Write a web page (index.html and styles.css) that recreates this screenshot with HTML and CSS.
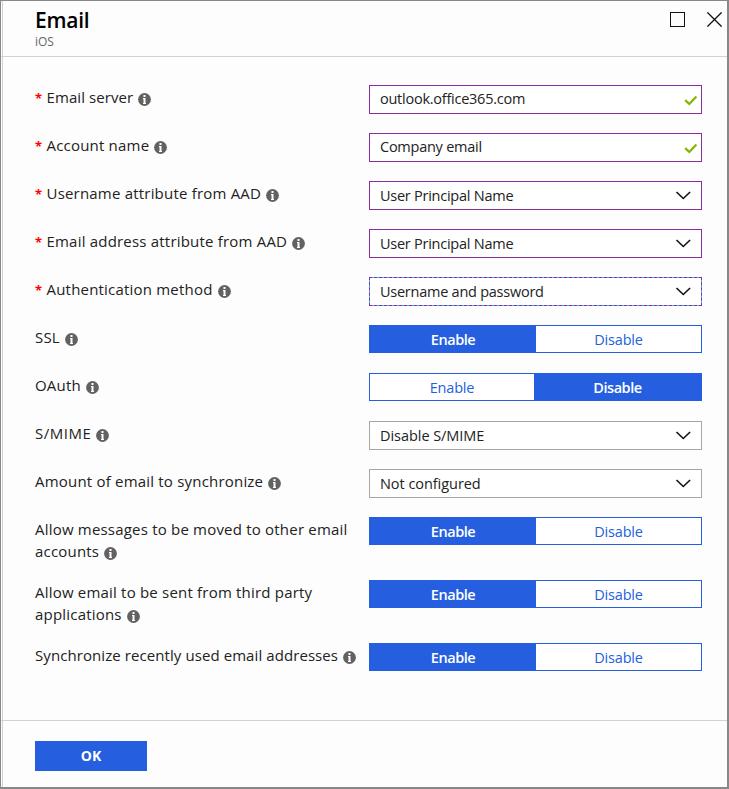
FILE: index.html
```html
<!DOCTYPE html>
<html lang="en">
<head>
<meta charset="utf-8">
<title>Email</title>
<link rel="stylesheet" href="styles.css">
</head>
<body>
<svg class="defs" aria-hidden="true">
  <symbol id="info" viewBox="0 0 13 13"><circle cx="6.5" cy="6.5" r="6.4" fill="#626262"/><path d="M5.500 2h2v2h-2zM5 5h2.500v5h.5v1H5v-1h.5V6H5z" fill="#fff"/></symbol>
  <symbol id="check" viewBox="0 0 14 11"><path d="M1.200 5.200 5.300 9 12.400 1.500" fill="none" stroke="#7fba00" stroke-width="2.300"/></symbol>
  <symbol id="chevron" viewBox="0 0 16 9"><path d="M1.500 1 8.300 7.500 15.100 1" fill="none" stroke="#111" stroke-width="1.600"/></symbol>
</svg>
<main class="blade">
  <header class="header">
    <div>
      <h1 class="title">Email</h1>
      <p class="subtitle">iOS</p>
    </div>
    <div class="window-actions">
      <svg width="15" height="15" viewBox="0 0 15 15"><rect x=".5" y=".5" width="14" height="14" fill="none" stroke="#111"/></svg>
      <svg width="15" height="15" viewBox="0 0 15 15"><path d="M.4.4 14.600 14.600M14.600.4.4 14.600" fill="none" stroke="#111" stroke-width="1.300"/></svg>
    </div>
  </header>
  <form class="form">
    <div class="row"><div class="label"><b class="req">*</b><span class="text snug">Email server</span><svg class="info"><use href="#info"/></svg></div><div class="field edited raised"><span>outlook.office365.com</span><svg class="check"><use href="#check"/></svg></div></div>
    <div class="row"><div class="label"><b class="req">*</b><span class="text">Account name</span><svg class="info"><use href="#info"/></svg></div><div class="field edited raised"><span>Company email</span><svg class="check"><use href="#check"/></svg></div></div>
    <div class="row"><div class="label"><b class="req">*</b><span class="text">Username attribute from AAD</span><svg class="info"><use href="#info"/></svg></div><div class="field edited"><span>User Principal Name</span><svg class="chevron"><use href="#chevron"/></svg></div></div>
    <div class="row"><div class="label"><b class="req">*</b><span class="text">Email address attribute from AAD</span><svg class="info"><use href="#info"/></svg></div><div class="field edited"><span>User Principal Name</span><svg class="chevron"><use href="#chevron"/></svg></div></div>
    <div class="row"><div class="label"><b class="req">*</b><span class="text">Authentication method</span><svg class="info"><use href="#info"/></svg></div><div class="field focused"><span>Username and password</span><svg class="chevron"><use href="#chevron"/></svg></div></div>
    <div class="row"><div class="label"><span class="text">SSL</span><svg class="info"><use href="#info"/></svg></div><div class="toggle"><span class="option on">Enable</span><span class="option">Disable</span></div></div>
    <div class="row"><div class="label"><span class="text">OAuth</span><svg class="info"><use href="#info"/></svg></div><div class="toggle second"><span class="option">Enable</span><span class="option on">Disable</span></div></div>
    <div class="row"><div class="label"><span class="text wide">S/MIME</span><svg class="info"><use href="#info"/></svg></div><div class="field"><span class="loose">Disable S/MIME</span><svg class="chevron"><use href="#chevron"/></svg></div></div>
    <div class="row"><div class="label"><span class="text">Amount of email to synchronize</span><svg class="info"><use href="#info"/></svg></div><div class="field"><span class="loose">Not configured</span><svg class="chevron"><use href="#chevron"/></svg></div></div>
    <div class="row"><div class="label"><span class="text">Allow messages to be moved to other email<br>accounts</span><svg class="info"><use href="#info"/></svg></div><div class="toggle"><span class="option on">Enable</span><span class="option">Disable</span></div></div>
    <div class="row"><div class="label"><span class="text">Allow email to be sent from third party<br>applications</span><svg class="info"><use href="#info"/></svg></div><div class="toggle"><span class="option on">Enable</span><span class="option">Disable</span></div></div>
    <div class="row"><div class="label"><span class="text snug">Synchronize recently used email addresses</span><svg class="info"><use href="#info"/></svg></div><div class="toggle"><span class="option on">Enable</span><span class="option">Disable</span></div></div>
  </form>
  <footer class="footer"><button class="ok" type="button">OK</button></footer>
</main>
</body>
</html>
```
FILE: styles.css
```css
* { box-sizing: border-box; }
body { margin: 0; font-family: "Open Sans", "Noto Sans", sans-serif; font-size: 14px; color: #222; }
.defs { display: none; }
.blade {
  width: 729px; height: 789px;
  display: flex; flex-direction: column;
  background: linear-gradient(90deg, #fdfdfd 1px, #d2d2d2 1px, #d2d2d2 2px, #fdfdfd 2px);
  border: solid #888; border-width: 1px 2px 2px 1px;
}
.header {
  height: 56px; flex: none;
  display: flex; justify-content: space-between;
  padding: 6px 5px 0 34px;
  border-bottom: 1px solid #d2d2d2;
}
.title { margin: 0; font-size: 21px; line-height: 27px; font-weight: 600; color: #000; letter-spacing: -.25px; }
.subtitle { margin: 0; font-size: 12px; line-height: 16px; color: #666; }
.window-actions { display: flex; gap: 22px; padding-top: 5px; }
.form { flex: 1; display: flex; flex-direction: column; gap: 17px; padding: 28px 0 0 34px; }
.row { display: grid; grid-template-columns: 334px 333px; min-height: 31px; align-items: start; }
.label { padding: 1px 0; line-height: 22px; white-space: nowrap; font-size: 15px; }
.text { letter-spacing: .2px; font-weight: 380; }
.snug { letter-spacing: .08px; }
.wide { letter-spacing: .5px; }
.req { display: inline-block; width: 11.500px; color: #f00; font-size: 13px; }
.info { width: 13px; height: 13px; margin-left: 5px; vertical-align: -3px; }
.field {
  height: 29px; border: 1px solid #a6a6a6; background: #fff;
  display: flex; align-items: center; justify-content: space-between;
  padding: 0 10px; font-weight: 380; font-size: 14.500px; letter-spacing: -.25px;
}
.loose { letter-spacing: -.05px; }
.edited { border-color: #8a2da5; }
.raised { padding: 0 3px 2px 10px; }
.focused { border: 1px solid #35b8f0; outline: 1px dashed #8a2da5; outline-offset: -1px; }
.check { width: 14px; height: 11px; margin-top: 3px; }
.chevron { width: 16px; height: 9px; }
.toggle { height: 28px; display: grid; grid-template-columns: 166px 1fr; border: 1px solid #255fe0; background: #fff; }
.toggle.second { grid-template-columns: 164px 1fr; }
.option { display: flex; align-items: center; justify-content: center; color: #255fe0; font-size: 14.500px; letter-spacing: -.2px; }
.option.on { background: #255fe0; color: #fff; font-weight: 600; letter-spacing: -.45px; }
.footer { height: 67px; flex: none; border-top: 1px solid #d2d2d2; padding: 20px 0 0 34px; }
.ok { width: 112px; height: 30px; border: 0; padding: 0 0 2px; background: #255fe0; color: #fff; font: 700 14px "Open Sans", sans-serif; }
```
